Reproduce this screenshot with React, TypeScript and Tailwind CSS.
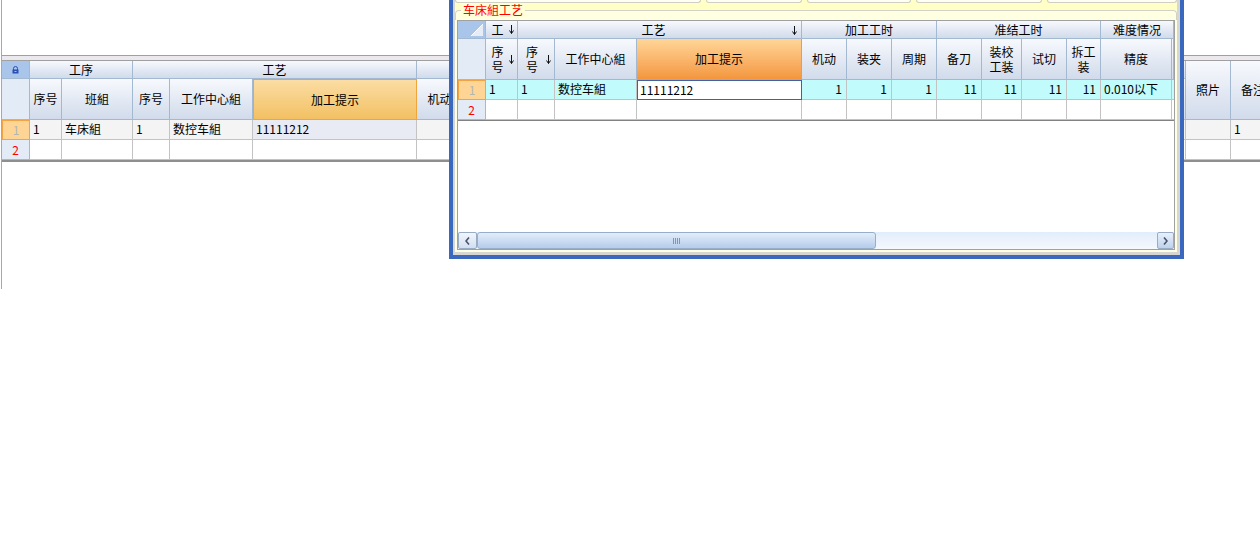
import React from 'react'

const hdr =
  'bg-linear-to-b from-[#f7f9fd] to-[#d1dbeb] border-r border-b border-[#a3b9d2] flex items-center justify-center'
const hdrOrange =
  'bg-linear-to-b from-[#fbdda3] to-[#f2c061] border border-[#f0a43c] flex items-center justify-center'
const hdrOrangeHot =
  'bg-linear-to-b from-[#ffd697] to-[#f3963c] border-r border-b border-[#ee9a46] flex items-center justify-center'
const rowHdr = 'bg-[#e3ebf7] border-r border-b border-[#a3b9d2] flex items-center justify-center'
const rowHdrCur =
  'bg-[#fed595] border border-[#f3a341] flex items-center justify-center text-[#b4b4b4]'
const cell = 'border-r border-b border-[#c3c3c3] px-[3px] flex items-center pb-[2px] whitespace-nowrap overflow-hidden'
const num = 'border-r border-b border-[#c3c3c3] px-[4px] flex items-center justify-end pb-[2px]'

const SortArrow = () => (
  <svg width="5" height="9" viewBox="0 0 5 9" className="shrink-0">
    <path d="M2.5 0V8.5M0.5 5.5L2.5 8.5L4.5 5.5" stroke="#111" fill="none" strokeWidth="1" />
  </svg>
)

const Lock = () => (
  <svg width="7" height="8" viewBox="0 0 7 8">
    <path d="M1.5 4V2.5a2 2 0 0 1 4 0V4" stroke="#2b4fb8" fill="none" />
    <rect x="0.5" y="3.5" width="6" height="4" fill="#2b4fb8" />
    <rect x="2.5" y="5" width="2" height="1" fill="#a9c3f2" />
  </svg>
)

// the grid that stays behind the dialog
function BackGrid() {
  return (
    <div className="grid grid-cols-[28px_32px_71px_37px_83px_164px_46px_723px_45px_45px] grid-rows-[18px_41px_20px_20px] border-t border-[#a0a0a0] border-b-2 border-b-[#8e8e8e]">
      <div className="bg-[#a9c5ea] border-r border-b border-[#a3b9d2] flex items-center justify-center">
        <Lock />
      </div>
      <div className={`col-span-2 ${hdr}`}>工序</div>
      <div className={`col-span-3 ${hdr}`}>工艺</div>
      <div className={`col-span-2 ${hdr}`}></div>
      <div className={`row-span-2 ${hdr}`}>照片</div>
      <div className={`row-span-2 ${hdr} whitespace-nowrap`}>备注</div>

      <div className={rowHdr}></div>
      <div className={hdr}>序号</div>
      <div className={hdr}>班組</div>
      <div className={hdr}>序号</div>
      <div className={hdr}>工作中心組</div>
      <div className={hdrOrange}>加工提示</div>
      <div className={hdr}>机动</div>
      <div className={hdr}></div>

      <div className={rowHdrCur}>1</div>
      <div className={`${cell} bg-[#f4f4f4]`}>1</div>
      <div className={`${cell} bg-[#f4f4f4]`}>车床組</div>
      <div className={`${cell} bg-[#f4f4f4]`}>1</div>
      <div className={`${cell} bg-[#f4f4f4]`}>数控车組</div>
      <div className={`${cell} bg-[#e8ebf4]`}>11111212</div>
      <div className={`${cell} bg-[#f4f4f4]`}></div>
      <div className={`${cell} bg-[#f4f4f4]`}></div>
      <div className={`${cell} bg-[#f4f4f4]`}></div>
      <div className={`${cell} bg-[#f4f4f4]`}>1</div>

      <div className={`${rowHdr} text-[#ff0000]`}>2</div>
      {Array.from({ length: 9 }).map((_, i) => (
        <div key={i} className={cell}></div>
      ))}
    </div>
  )
}

function TwoLine({ a, b }: { a: string; b: string }) {
  return (
    <div className="flex flex-col items-center leading-[15px]">
      <span>{a}</span>
      <span>{b}</span>
    </div>
  )
}

function DialogGrid() {
  return (
    <div className="flex-1 flex flex-col border border-[#a0a0a0] bg-white">
      <div className="grid grid-cols-[28px_32px_37px_82px_165px_45px_45px_45px_45px_40px_45px_34px_71px_2px] grid-rows-[18px_41px_20px_20px] border-b border-[#828282]">
        <div className="relative bg-[#a9c5ea] border-r border-b border-[#a3b9d2]">
          <svg width="27" height="17" viewBox="0 0 27 17" className="absolute left-0 top-0">
            <polygon points="25,3 25,15 13,15" fill="#e7edf6" />
            <path d="M25 3L13 15" stroke="#ffffff" strokeWidth="1" />
          </svg>
        </div>
        <div className={`${hdr} !justify-start`}>
          <span className="flex-1 text-center">工</span>
          <span className="mr-[3px]">
            <SortArrow />
          </span>
        </div>
        <div className={`col-span-3 relative ${hdr}`}>
          <span className="pr-[12px]">工艺</span>
          <span className="absolute right-[4px] top-[5px]">
            <SortArrow />
          </span>
        </div>
        <div className={`col-span-3 ${hdr}`}>加工工时</div>
        <div className={`col-span-4 ${hdr}`}>准结工时</div>
        <div className={`col-span-2 ${hdr}`}>难度情况</div>

        <div className={rowHdr}></div>
        <div className={`${hdr} !justify-start`}>
          <span className="flex-1 flex justify-center">
            <TwoLine a="序" b="号" />
          </span>
          <span className="mr-[3px]">
            <SortArrow />
          </span>
        </div>
        <div className={`${hdr} !justify-start`}>
          <span className="flex-1 flex justify-center">
            <TwoLine a="序" b="号" />
          </span>
          <span className="mr-[3px]">
            <SortArrow />
          </span>
        </div>
        <div className={hdr}>工作中心組</div>
        <div className={hdrOrangeHot}>加工提示</div>
        <div className={hdr}>机动</div>
        <div className={hdr}>装夹</div>
        <div className={hdr}>周期</div>
        <div className={hdr}>备刀</div>
        <div className={hdr}>
          <TwoLine a="装校" b="工装" />
        </div>
        <div className={hdr}>试切</div>
        <div className={hdr}>
          <TwoLine a="拆工" b="装" />
        </div>
        <div className={hdr}>精度</div>
        <div className={hdr}></div>

        <div className={rowHdrCur}>1</div>
        <div className={`${cell} bg-[#c1fbfb]`}>1</div>
        <div className={`${cell} bg-[#c1fbfb]`}>1</div>
        <div className={`${cell} bg-[#c1fbfb]`}>数控车組</div>
        <div className="border border-[#3b62b2] bg-white px-[2px] flex items-center">11111212</div>
        <div className={`${num} bg-[#c1fbfb]`}>1</div>
        <div className={`${num} bg-[#c1fbfb]`}>1</div>
        <div className={`${num} bg-[#c1fbfb]`}>1</div>
        <div className={`${num} bg-[#c1fbfb]`}>11</div>
        <div className={`${num} bg-[#c1fbfb]`}>11</div>
        <div className={`${num} bg-[#c1fbfb]`}>11</div>
        <div className={`${num} bg-[#c1fbfb]`}>11</div>
        <div className={`${cell} bg-[#c1fbfb]`}>0.010以下</div>
        <div className="border-b border-[#c3c3c3] bg-[#c1fbfb]"></div>

        <div className={`${rowHdr} text-[#ff0000]`}>2</div>
        {Array.from({ length: 12 }).map((_, i) => (
          <div key={i} className={cell}></div>
        ))}
        <div className="border-b border-[#c3c3c3]"></div>
      </div>

      <div className="flex-1" />

      {/* horizontal scroll bar */}
      <div className="h-[17px] flex bg-linear-to-b from-[#e2edfb] to-[#f5f8fe]">
        <div className="w-[19px] border border-[#98acc8] rounded-[2px] bg-linear-to-b from-[#f2f6fc] to-[#d3dff0] flex items-center justify-center">
          <svg width="5" height="8" viewBox="0 0 5 8">
            <path d="M4 0.5L1 4L4 7.5" stroke="#46556b" strokeWidth="1.6" fill="none" />
          </svg>
        </div>
        <div className="w-[399px] border border-[#97aecb] rounded-[3px] bg-linear-to-b from-[#e3edfa] to-[#b6ccea] flex items-center justify-center gap-px">
          <span className="w-px h-[6px] bg-[#7f95b6]" />
          <span className="w-px h-[6px] bg-[#7f95b6]" />
          <span className="w-px h-[6px] bg-[#7f95b6]" />
          <span className="w-px h-[6px] bg-[#7f95b6]" />
        </div>
        <div className="flex-1" />
        <div className="w-[17px] border border-[#98acc8] rounded-[2px] bg-linear-to-b from-[#e8f0fb] to-[#bfd2ec] flex items-center justify-center">
          <svg width="5" height="8" viewBox="0 0 5 8">
            <path d="M1 0.5L4 4L1 7.5" stroke="#46556b" strokeWidth="1.6" fill="none" />
          </svg>
        </div>
      </div>
    </div>
  )
}

function Dialog() {
  return (
    <div className="absolute left-[449px] top-0 w-[735px] h-[259px] border-x-4 border-b-4 border-[#3a68bf]">
      <div className="h-full border-l-2 border-r-[3px] border-b-[3px] border-[#d6d6d3]">
        <div className="h-full bg-[#ffffe2] flex flex-col px-[2px] pb-[2px]">
          {/* bottoms of the boxes above */}
          <div className="h-[10px] -mx-[2px] bg-[#ffffc6] flex gap-[5px] items-start">
            <div className="w-[246px] h-[3px] bg-[#fffff4] border-x border-b border-[#cfcfc4] rounded-b-[3px]" />
            <div className="w-[96px] h-[3px] bg-[#fffff4] border-x border-b border-[#cfcfc4] rounded-b-[3px]" />
            <div className="w-[104px] h-[3px] bg-[#fffff4] border-x border-b border-[#cfcfc4] rounded-b-[3px]" />
            <div className="w-[126px] h-[3px] bg-[#fffff4] border-x border-b border-[#cfcfc4] rounded-b-[3px]" />
            <div className="flex-1 h-[3px] bg-[#fffff4] border-x border-b border-[#cfcfc4] rounded-b-[3px]" />
          </div>
          {/* group box top line and title */}
          <div className="relative h-[10px] -mx-[2px] border-t border-x border-[#d2d2c4] rounded-t-[4px]">
            <span className="absolute left-[5px] -top-[8px] px-[2px] bg-[#ffffd6] text-[#ff0000] leading-[14px]">
              车床組工艺
            </span>
          </div>
          <DialogGrid />
        </div>
      </div>
    </div>
  )
}

export default function App() {
  return (
    <div className="relative w-[1260px] h-[540px] overflow-hidden bg-white text-[12px] text-black font-['Noto_Sans_CJK_SC','Liberation_Sans',sans-serif]">
      <div className="ml-px h-[289px] border-l border-[#a8a8a8] flex flex-col">
        <div className="h-[56px] border-b border-[#a0a0a0]" />
        <div className="h-[4px] bg-[#ebe9ed]" />
        <BackGrid />
      </div>
      <Dialog />
    </div>
  )
}
